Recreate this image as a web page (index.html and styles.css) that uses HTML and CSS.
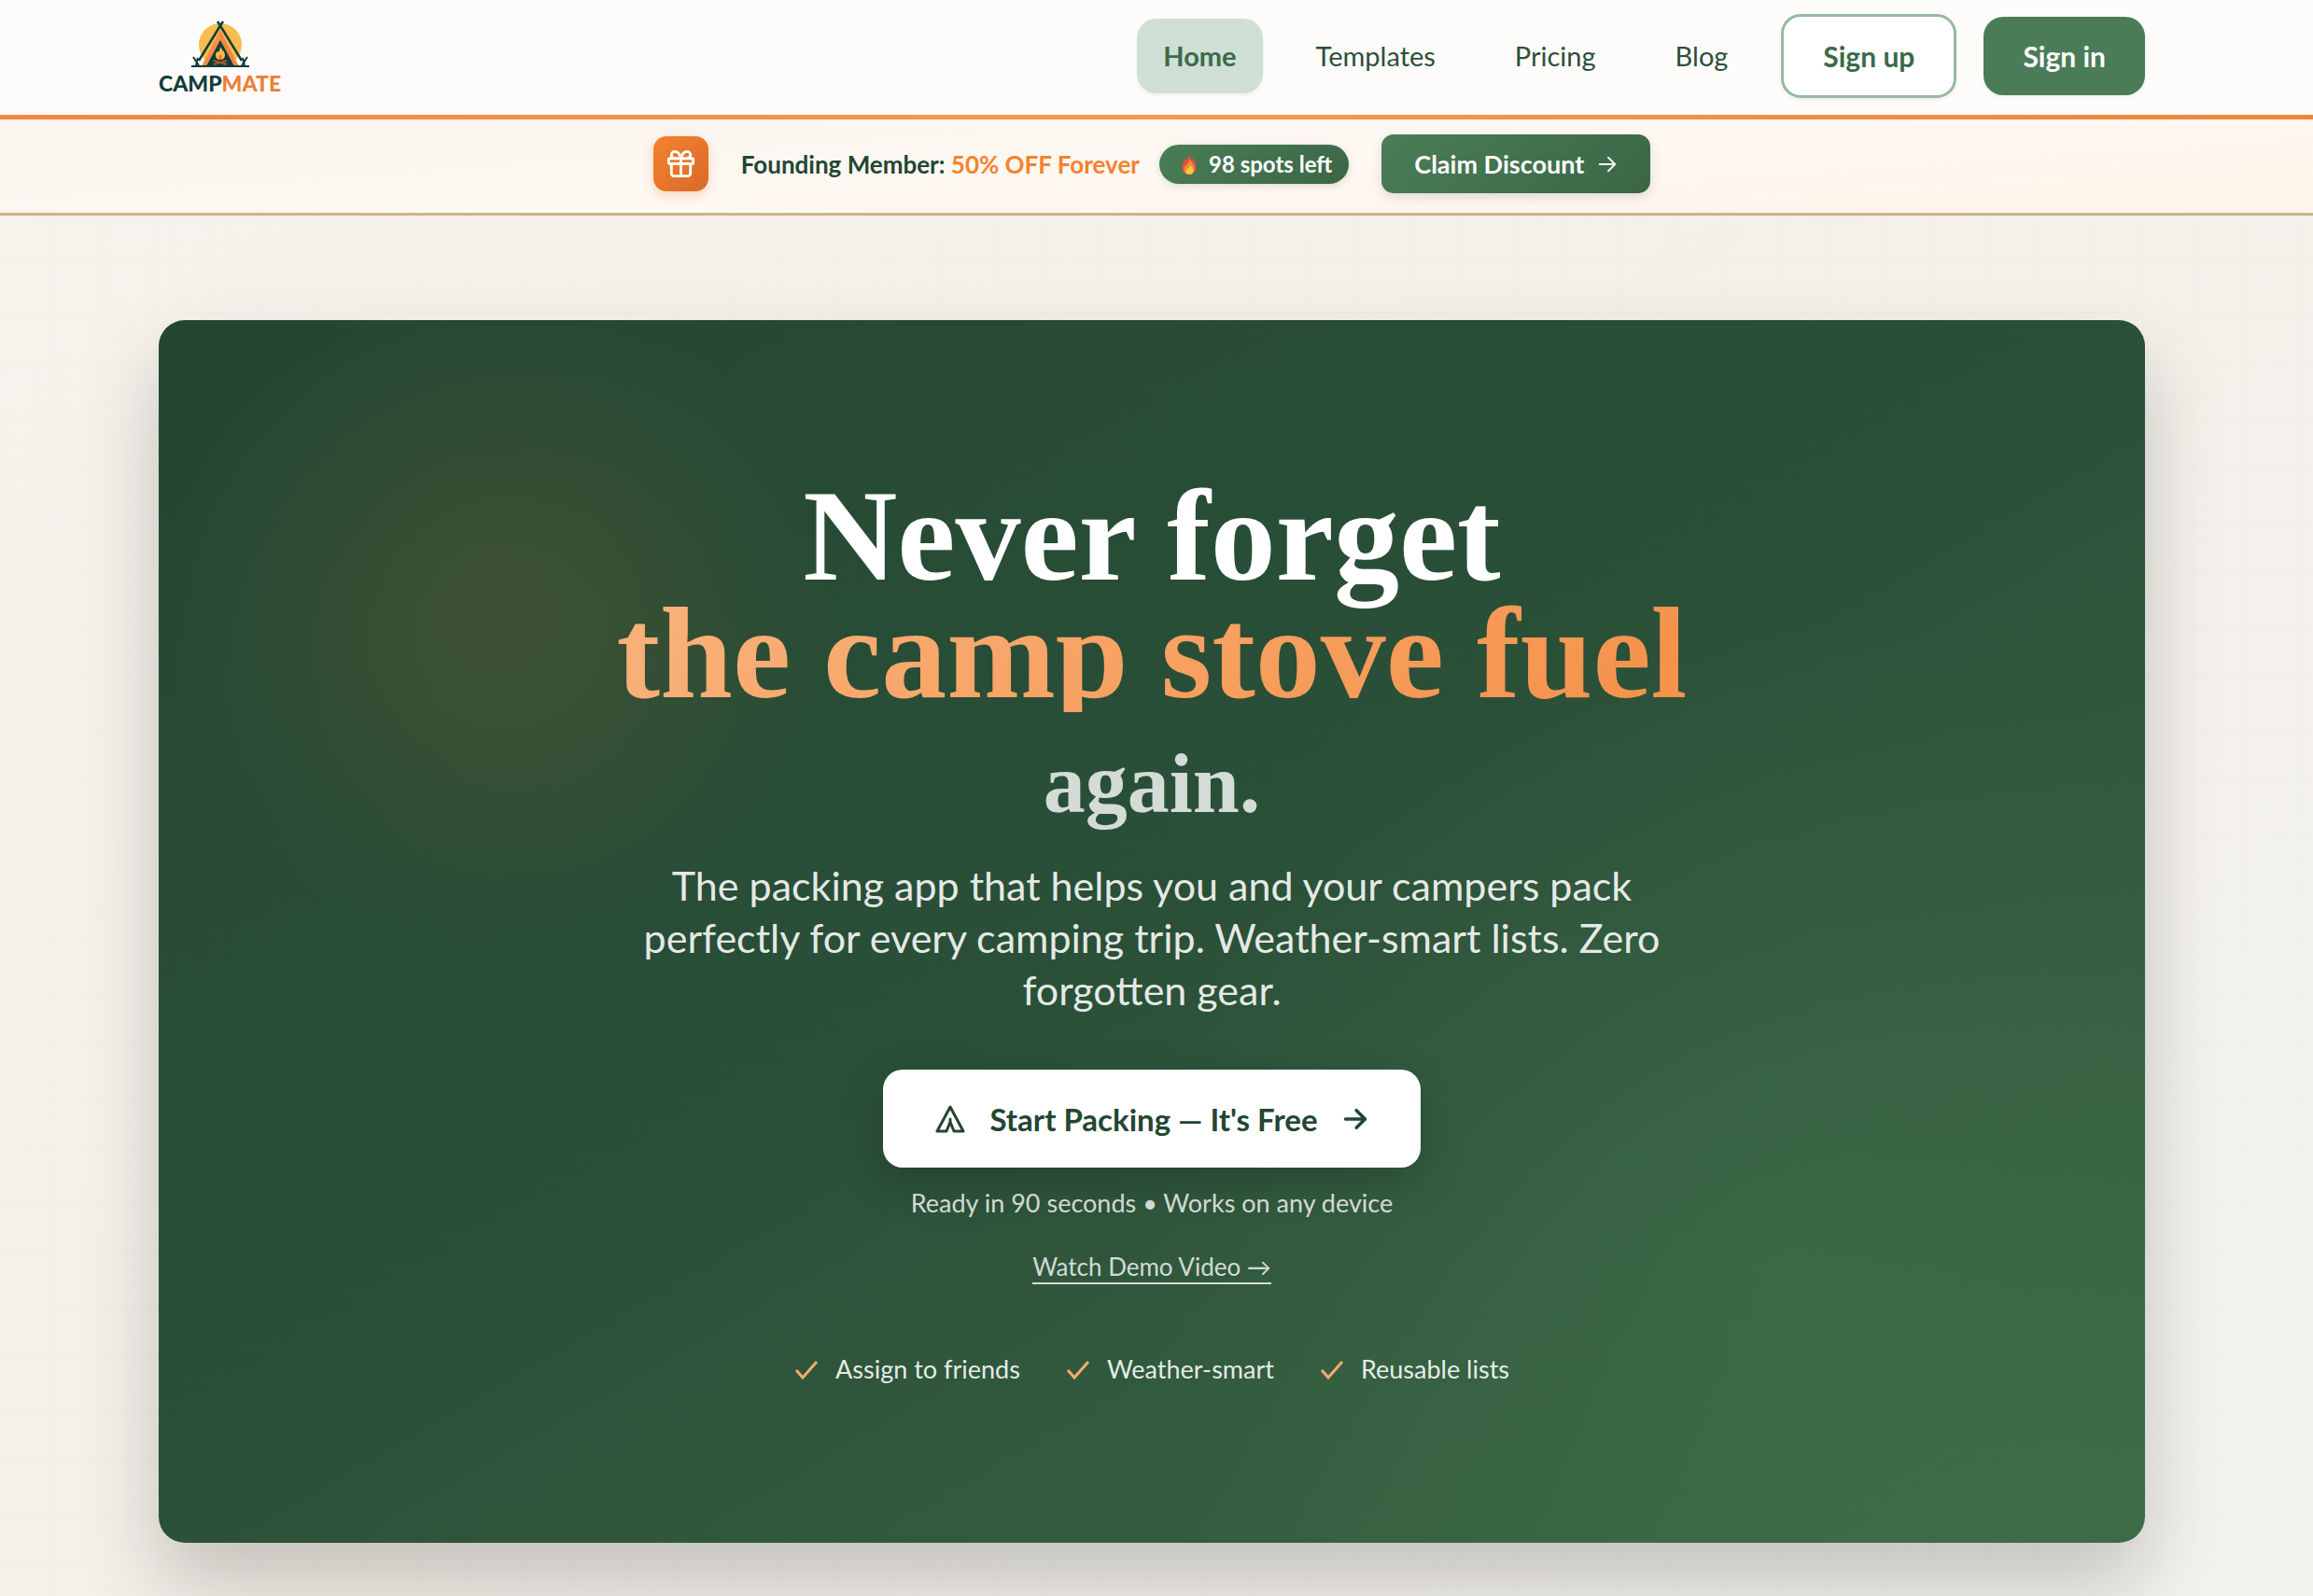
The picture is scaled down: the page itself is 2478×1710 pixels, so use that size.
FILE: index.html
```
<!DOCTYPE html>
<html lang="en">
<head>
    <meta charset="UTF-8">
    <meta name="viewport" content="width=device-width, initial-scale=1.0">
    <title>CampMate</title>
    <link rel="stylesheet" href="styles.css">
</head>

<body>
    <header class="header">
        <a class="logo" href="#" aria-label="CampMate home">
            <svg class="logo-mark" viewBox="0 0 62 50" aria-hidden="true">
                <circle cx="31" cy="26" r="23" fill="#f9bc4f"/>
                <path d="M31 10 11 49h40z" fill="#f0883e"/>
                <path d="M31 10v12L20 49H11z" fill="#f58d4e"/>
                <path d="M31 21 16 49h30z" fill="#0f3d3a"/>
                <path d="M31 28c1 3 5 5 5 9 0 3-2 5-5 5s-5-2-5-5c0-2 1-3 2-4l1 1c1-2 2-3 2-6z" fill="#f9bc4f"/>
                <path d="M31 36c1 1 2 2 2 4s-1 2-2 2-2-1-2-2 1-3 2-4z" fill="#ef7a2e"/>
                <path d="m24 43 14 4M38 43l-14 4" stroke="#a85a2a" stroke-width="2"/>
                <path d="M28 1 31 5.500 54 43M34 1 31 5.500 8 43" fill="none" stroke="#0f3d3a" stroke-width="2.500"/>
                <path d="M0 49h62M2 39l6 9M60 39l-6 9M5 48l2-8M57 48l-2-8" fill="none" stroke="#0f3d3a" stroke-width="2"/>
            </svg>
            <span class="logo-text">CAMP<span class="logo-accent">MATE</span></span>
        </a>
        <nav class="nav">
            <a class="nav-link active" href="#">Home</a>
            <a class="nav-link" href="#">Templates</a>
            <a class="nav-link" href="#">Pricing</a>
            <a class="nav-link" href="#">Blog</a>
            <button class="btn-signup" type="button">Sign up</button>
            <button class="btn-signin" type="button">Sign in</button>
        </nav>
    </header>

    <section class="promo">
        <span class="promo-icon">
            <svg viewBox="0 0 24 24" aria-hidden="true">
                <rect x="3" y="8" width="18" height="4" rx="1"/>
                <path d="M12 8v13M19 12v7a2 2 0 0 1-2 2H7a2 2 0 0 1-2-2v-7M7.500 8a2.500 2.500 0 0 1 0-5A4.800 8 0 0 1 12 8a4.800 8 0 0 1 4.500-5 2.500 2.500 0 0 1 0 5"/>
            </svg>
        </span>
        <p class="promo-text">Founding Member: <span class="promo-accent">50% OFF Forever</span></p>
        <span class="spots">
            <svg class="flame" viewBox="0 0 16 24" aria-hidden="true">
                <path d="M8 0c0 4 2 5 3 7l1-2c3 4 4 7 4 11 0 5-3 8-8 8s-8-3-8-8c0-5 2-7 3-11l1 3C5 6 8 4 8 0z" fill="#e8503a"/>
                <path d="M9 6c1 4 5 6 5 11 0 4-2 7-6 7s-6-3-6-6c0-4 5-6 7-12z" fill="#f58a35"/>
                <path d="M10 13c1 2 3 4 3 6 0 3-2 5-5 5s-4-2-4-4c0-3 4-3 6-7z" fill="#fdc43f"/>
            </svg>
            98 spots left
        </span>
        <button class="btn-claim" type="button">
            Claim Discount
            <svg class="arrow" viewBox="0 0 24 24" aria-hidden="true"><path d="M3 12h18M13 4l8 8-8 8"/></svg>
        </button>
    </section>

    <main class="main">
        <section class="hero">
            <h1 class="hero-title">
                Never forget
                <span class="hero-item">the camp stove fuel</span>
                <span class="hero-again">again.</span>
            </h1>
            <p class="hero-text">The packing app that helps you and your campers pack perfectly for every camping trip. Weather-smart lists. Zero forgotten gear.</p>
            <button class="btn-start" type="button">
                <svg class="tent" viewBox="0 0 32 32" aria-hidden="true"><path d="M16 3 2 29h10l4-10 4 10h10zM16 19v-3"/></svg>
                Start Packing — It's Free
                <svg class="arrow" viewBox="0 0 24 24" aria-hidden="true"><path d="M3 12h18M13 4l8 8-8 8"/></svg>
            </button>
            <p class="hero-note">Ready in 90 seconds • Works on any device</p>
            <a class="demo-link" href="#">Watch Demo Video →</a>
            <ul class="features">
                <li><svg viewBox="0 0 26 26" aria-hidden="true"><path d="m2 14 7 8L24 5"/></svg>Assign to friends</li>
                <li><svg viewBox="0 0 26 26" aria-hidden="true"><path d="m2 14 7 8L24 5"/></svg>Weather-smart</li>
                <li><svg viewBox="0 0 26 26" aria-hidden="true"><path d="m2 14 7 8L24 5"/></svg>Reusable lists</li>
            </ul>
        </section>
    </main>
</body>
</html>
```
FILE: styles.css
```
/* General Styles */
* {
    box-sizing: border-box;
}

body {
    margin: 0;
    min-height: 100vh;
    font-family: Lato, "Liberation Sans", sans-serif;
    font-size: 26px;
    color: #234632;
    background:
        linear-gradient(90deg, transparent 55px, rgba(0, 0, 0, 0.01) 55px) 0 0 / 56px 56px,
        linear-gradient(transparent 55px, rgba(0, 0, 0, 0.01) 55px) 0 0 / 56px 56px,
        linear-gradient(135deg, #f6f2ec 0%, #f4f0e9 50%, #f3f2ee 100%);
}

p, h1, ul {
    margin: 0;
    padding: 0;
}

button {
    font-family: inherit;
    border: none;
    cursor: pointer;
}

svg {
    flex: none;
}

/* Header */
.header {
    display: flex;
    align-items: center;
    justify-content: space-between;
    height: 128px;
    padding: 0 180px 3px 170px;
    background-color: #fefcfa;
    border-bottom: 5px solid #f5924a;
    border-image: linear-gradient(90deg, #f5863c, #f9984f, #f0853b) 1;
}

.logo {
    display: flex;
    flex-direction: column;
    align-items: center;
    padding-top: 4px;
    text-decoration: none;
}

.logo-mark {
    width: 62px;
    height: 50px;
}

.logo-text {
    font-size: 23px;
    line-height: 26px;
    font-weight: 900;
    color: #0f3d3a;
    margin-top: 4px;
}

.logo-accent {
    color: #ec7f37;
}

.nav {
    display: flex;
    align-items: center;
    gap: 29px;
}

.nav-link {
    padding: 20px 28px;
    font-size: 29px;
    line-height: 40px;
    border-radius: 21px;
    color: #2b5039;
    text-decoration: none;
}

.nav-link.active {
    background-color: #cfdfd5;
    color: #3b6a48;
    font-weight: 700;
    box-shadow: 0 2px 4px rgba(0, 0, 0, 0.06);
}

.btn-signup,
.btn-signin {
    padding: 22px 42px;
    font-size: 30px;
    line-height: 40px;
    font-weight: 700;
    border-radius: 21px;
    box-shadow: 0 2px 4px rgba(0, 0, 0, 0.06);
}

.btn-signup {
    background-color: #fff;
    border: 3px solid #94b99f;
    color: #3b6a48;
}

.btn-signin {
    background-color: #4a7d57;
    color: #fff;
}

/* Promo Bar */
.promo {
    display: flex;
    align-items: center;
    justify-content: center;
    gap: 35px;
    height: 103px;
    padding: 0 10px 5px 0;
    background: linear-gradient(176deg, #f9f4ee, #fef8f3 50%, #fff4e8);
    border-bottom: 3px solid #cdb388;
}

.promo-icon {
    display: grid;
    place-items: center;
    width: 59px;
    height: 59px;
    border-radius: 14px;
    background: linear-gradient(135deg, #f5822f, #d86a28);
    box-shadow: 0 4px 12px rgba(240, 130, 50, 0.3);
}

.promo-icon svg {
    width: 35px;
    height: 35px;
    fill: none;
    stroke: #fff;
    stroke-width: 2;
}

.promo-text {
    font-weight: 700;
    color: #234632;
}

.promo-accent {
    color: #f5822f;
}

.spots {
    display: flex;
    align-items: center;
    gap: 13px;
    margin-left: -14px;
    padding: 0 18px 0 24px;
    font-size: 24px;
    line-height: 42px;
    font-weight: 700;
    color: #fff;
    border-radius: 21px;
    background: linear-gradient(135deg, #4a7d57, #3b6646);
    box-shadow: 0 2px 8px rgba(0, 0, 0, 0.12);
}

.flame {
    width: 16px;
    height: 22px;
}

.btn-claim {
    display: flex;
    align-items: center;
    gap: 14px;
    height: 63px;
    padding: 0 35px;
    font-size: 27px;
    font-weight: 700;
    color: #fff;
    border-radius: 13px;
    background: linear-gradient(135deg, #4a7d57, #3b6646);
    box-shadow: 0 4px 12px rgba(0, 0, 0, 0.12);
}

.arrow {
    width: 22px;
    height: 22px;
    fill: none;
    stroke: currentColor;
    stroke-width: 2;
    stroke-linecap: round;
    stroke-linejoin: round;
}

/* Hero */
.main {
    padding: 112px 180px 57px 170px;
}

.hero {
    display: flex;
    flex-direction: column;
    align-items: center;
    padding: 168px 40px;
    text-align: center;
    color: #fff;
    border-radius: 28px;
    background:
        radial-gradient(circle at 17% 24%, rgba(240, 130, 50, 0.12), transparent 360px),
        radial-gradient(circle at 82% 78%, rgba(84, 136, 96, 0.22), transparent 700px),
        linear-gradient(150deg, #234632 0%, #2b5038 50%, #3c6946 100%);
    box-shadow: 0 44px 88px rgba(0, 0, 0, 0.2);
}

.hero-title {
    font-family: "Liberation Serif", serif;
    font-size: 140px;
    line-height: 126px;
    font-weight: 700;
}

.hero-item {
    display: block;
    background: linear-gradient(135deg, #f9b27b, #f5914a);
    background-clip: text;
    -webkit-background-clip: text;
    color: transparent;
}

.hero-again {
    display: block;
    margin-top: 14px;
    font-size: 90px;
    color: rgba(255, 255, 255, 0.8);
}

.hero-text {
    max-width: 1120px;
    margin-top: 18px;
    font-size: 43px;
    line-height: 56px;
    color: rgba(255, 255, 255, 0.9);
}

.btn-start {
    display: flex;
    align-items: center;
    height: 105px;
    margin-top: 57px;
    padding: 0 56px;
    gap: 26px;
    font-size: 33px;
    font-weight: 700;
    color: #234632;
    background-color: #fff;
    border-radius: 21px;
    box-shadow: 0 16px 48px rgba(0, 0, 0, 0.2);
}

.btn-start .arrow {
    width: 28px;
    height: 28px;
    stroke-width: 3;
}

.tent {
    width: 32px;
    height: 32px;
    fill: none;
    stroke: currentColor;
    stroke-width: 3;
    stroke-linejoin: round;
    stroke-linecap: round;
}

.hero-note {
    margin-top: 20px;
    font-size: 27px;
    line-height: 36px;
    color: rgba(255, 255, 255, 0.8);
}

.demo-link {
    margin-top: 34px;
    line-height: 33px;
    color: rgba(255, 255, 255, 0.8);
    text-decoration: none;
    border-bottom: 2px solid rgba(255, 255, 255, 0.8);
}

.features {
    display: flex;
    gap: 49px;
    margin-top: 73px;
    list-style: none;
    font-size: 27px;
    line-height: 36px;
    color: rgba(255, 255, 255, 0.9);
}

.features li {
    display: flex;
    align-items: center;
    gap: 18px;
}

.features svg {
    width: 26px;
    height: 26px;
    fill: none;
    stroke: #f9ab6c;
    stroke-width: 3;
}
```
